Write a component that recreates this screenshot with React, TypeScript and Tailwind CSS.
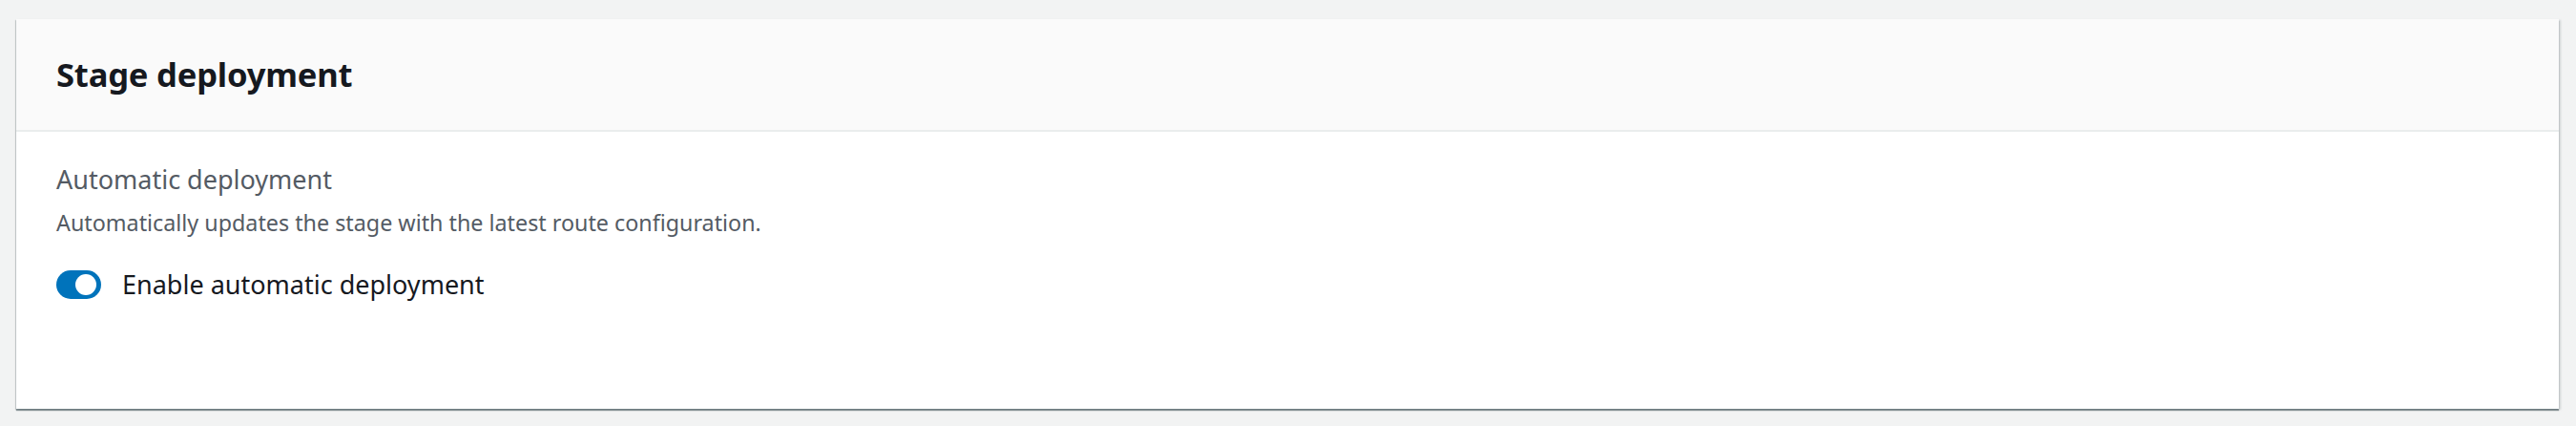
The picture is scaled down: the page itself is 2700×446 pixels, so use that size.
import React, { useState } from 'react';

export default function App() {
  const [enabled, setEnabled] = useState(true);

  return (
    <div className="min-h-[446px] bg-[#f2f3f3] pt-[20px] pl-[17px] pr-[18px] font-['Noto_Sans',sans-serif]">
      <div className="bg-white shadow-[0_2px_1px_0_rgba(0,28,36,0.4),2px_1px_2px_0_rgba(0,28,36,0.15),-1px_1px_1px_0_rgba(0,28,36,0.15)]">
        {/* Header */}
        <div className="h-[118px] bg-[#fafafa] border-b-2 border-[#eaeded] flex items-center px-[42px]">
          <h2 className="text-[34.6px] font-bold text-[#16191f] tracking-[-0.2px]">Stage deployment</h2>
        </div>

        {/* Body */}
        <div className="px-[42px] pt-[32px] pb-[112px]">
          <div className="text-[27px] leading-[36px] text-[#545b64]">Automatic deployment</div>
          <div className="text-[23.3px] leading-[34px] text-[#545b64] mt-[10px]">
            Automatically updates the stage with the latest route configuration.
          </div>
          <label className="flex items-center h-[36px] gap-[22px] mt-[30px] cursor-pointer">
            <button
              type="button"
              onClick={() => setEnabled(!enabled)}
              className={`relative w-[47px] h-[30px] rounded-full ${enabled ? 'bg-[#0073bb]' : 'bg-[#687078]'}`}
            >
              <span
                className={`absolute top-[4px] w-[22px] h-[22px] rounded-full bg-white ${enabled ? 'right-[5px]' : 'left-[5px]'}`}
              />
            </button>
            <span className="text-[27px] leading-[36px] text-[#16191f]">Enable automatic deployment</span>
          </label>
        </div>
      </div>
    </div>
  );
}
